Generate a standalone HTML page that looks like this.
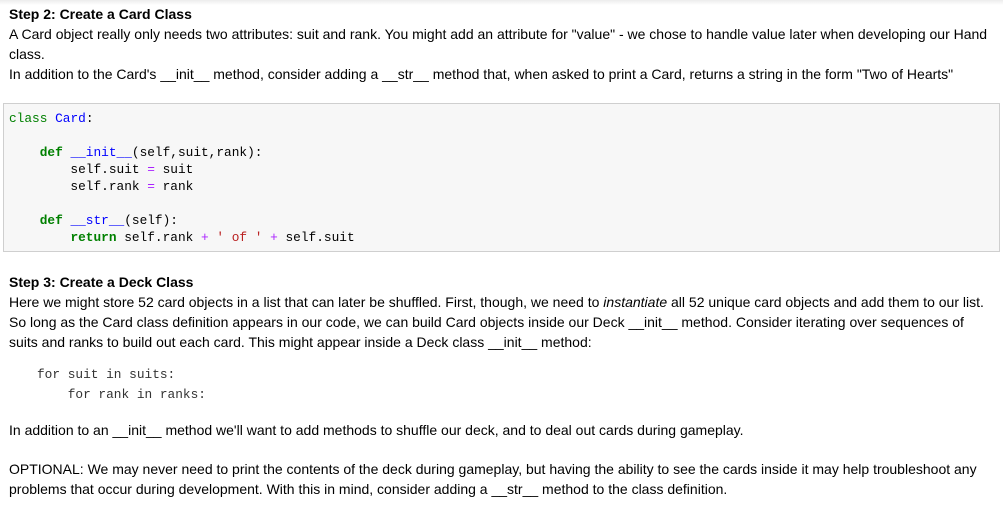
<!DOCTYPE html><html><head><style>
body{margin:0;background:#fff;width:1003px;height:518px;overflow:hidden;font-family:"Liberation Sans",Arial,sans-serif;font-size:14px;color:#000;}
.shadow{position:absolute;left:0;top:0;width:1003px;height:5px;background:linear-gradient(#ececec,#fff)}
.t{position:absolute;left:9px;line-height:20px;white-space:nowrap}
b{font-weight:bold}
.code{position:absolute;left:3px;top:103px;width:995px;height:147px;background:#f7f7f7;border:1px solid #cfcfcf;}
pre{margin:0;font-family:"Liberation Mono",monospace;font-size:12.8px;line-height:17px;position:absolute}
.k{color:#008000;font-weight:bold}.c{color:#0000ff}.f{color:#0000ff}.o{color:#aa22ff}.s{color:#ba2121}
</style></head><body>
<div class="shadow"></div>
<div class="t" style="top:4px"><b>Step 2: Create a Card Class</b></div>
<div class="t" style="top:24px">A Card object really only needs two attributes: suit and rank. You might add an attribute for "value" - we chose to handle value later when developing our Hand</div>
<div class="t" style="top:44px">class.</div>
<div class="t" style="top:64px">In addition to the Card's __init__ method, consider adding a __str__ method that, when asked to print a Card, returns a string in the form "Two of Hearts"</div>
<div class="code"><pre style="left:5px;top:6px"><span class="k" style="font-weight:normal">class</span> <span class="c">Card</span>:

    <span class="k">def</span> <span class="f">__init__</span>(self,suit,rank):
        self.suit <span class="o">=</span> suit
        self.rank <span class="o">=</span> rank

    <span class="k">def</span> <span class="f">__str__</span>(self):
        <span class="k">return</span> self.rank <span class="o">+</span> <span class="s">' of '</span> <span class="o">+</span> self.suit</pre></div>
<div class="t" style="top:272px"><b>Step 3: Create a Deck Class</b></div>
<div class="t" style="top:292px">Here we might store 52 card objects in a list that can later be shuffled. First, though, we need to <i>instantiate</i> all 52 unique card objects and add them to our list.</div>
<div class="t" style="top:312px">So long as the Card class definition appears in our code, we can build Card objects inside our Deck __init__ method. Consider iterating over sequences of</div>
<div class="t" style="top:332px">suits and ranks to build out each card. This might appear inside a Deck class __init__ method:</div>
<pre style="left:37px;top:365px;line-height:20px;color:#333">for suit in suits:
    for rank in ranks:</pre>
<div class="t" style="top:420px">In addition to an __init__ method we'll want to add methods to shuffle our deck, and to deal out cards during gameplay.</div>
<div class="t" style="top:459px">OPTIONAL: We may never need to print the contents of the deck during gameplay, but having the ability to see the cards inside it may help troubleshoot any</div>
<div class="t" style="top:479px">problems that occur during development. With this in mind, consider adding a __str__ method to the class definition.</div>
</body></html>
